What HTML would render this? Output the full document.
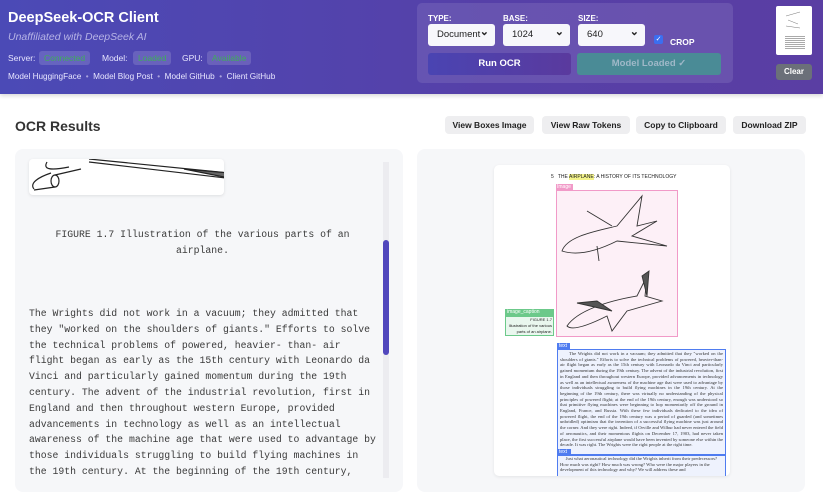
<!DOCTYPE html>
<html><head><meta charset="utf-8"><style>
*{box-sizing:border-box;margin:0;padding:0}
body{width:823px;height:496px;overflow:hidden;background:#fff;font-family:"Liberation Sans",sans-serif;position:relative}
.hdr{position:absolute;left:0;top:0;width:823px;height:94px;background:linear-gradient(90deg,#4b4ab6,#5640a8 60%,#5a3ea3);box-shadow:0 2px 4px rgba(0,0,0,.15)}
.abs{position:absolute}
h1{position:absolute;left:8px;top:10px;font-size:14.5px;color:#fff;font-weight:bold}
.sub{left:8px;top:31px;font-size:10.5px;font-style:italic;color:#b7b4e6}
.st{top:53px;font-size:8.5px;color:#e8e6ff}
.pill{position:absolute;top:51px;height:14px;background:rgba(255,255,255,.15);border-radius:3px;color:#3fae5a;font-size:8.5px;line-height:14px;padding:0 5px}
.links{left:8px;top:72px;font-size:8.2px;color:#e8e6ff}
.links span{color:#a9a3dd;margin:0 4.5px}
.ctl{left:417px;top:3px;width:316px;height:80px;background:rgba(255,255,255,.1);border-radius:5px}
.lbl{font-size:8px;font-weight:bold;color:#fff;top:14px}
.sel{top:24px;height:22px;background:#f7f7fb;border-radius:3px;font-size:9.5px;color:#222;line-height:22px;padding-left:9px}
.sel i{position:absolute;right:6px;top:-3px;font-style:normal;font-size:11px;font-weight:bold}
.btn{top:53px;height:22px;border-radius:3px;font-size:9.5px;font-weight:bold;text-align:center;line-height:22px}
.tb{top:116px;height:18px;background:#eeeef0;border-radius:4px;font-size:8.5px;color:#222;text-align:center;line-height:18px;font-weight:bold}
.panel{top:149px;height:343px;background:#f6f7f9;border-radius:8px}
.mono{font-family:"Liberation Mono",monospace;font-size:9.8px;color:#3a3a3a;line-height:15.8px;white-space:pre}
</style></head><body>
<div class="hdr">
<h1>DeepSeek-OCR Client</h1>
<div class="abs sub">Unaffiliated with DeepSeek AI</div>
<div class="abs st" style="left:8px">Server:</div>
<div class="pill" style="left:39px">Connected</div>
<div class="abs st" style="left:102px">Model:</div>
<div class="pill" style="left:133px">Loaded</div>
<div class="abs st" style="left:182px">GPU:</div>
<div class="pill" style="left:207px">Available</div>
<div class="abs links">Model HuggingFace<span>•</span>Model Blog Post<span>•</span>Model GitHub<span>•</span>Client GitHub</div>
<div class="abs ctl"></div>
<div class="abs lbl" style="left:428px">TYPE:</div>
<div class="abs lbl" style="left:503px">BASE:</div>
<div class="abs lbl" style="left:578px">SIZE:</div>
<div class="abs sel" style="left:428px;width:67px">Document<i>⌄</i></div>
<div class="abs sel" style="left:503px;width:67px">1024<i>⌄</i></div>
<div class="abs sel" style="left:578px;width:67px">640<i>⌄</i></div>
<div class="abs" style="left:654px;top:35px;width:9px;height:9px;background:#3b6ef0;border-radius:2px;color:#fff;font-size:7px;line-height:9px;text-align:center">✓</div>
<div class="abs" style="left:670px;top:37px;font-size:8.5px;color:#fff;font-weight:bold">CROP</div>
<div class="abs btn" style="left:428px;width:143px;background:linear-gradient(90deg,#4a44b2,#5a3a9e);color:#fff">Run OCR</div>
<div class="abs btn" style="left:577px;width:144px;background:#4a8b96;color:#9fb8c8">Model Loaded ✓</div>
<div class="abs" style="left:776px;top:6px;width:36px;height:49px;background:#fff;border-radius:2px">
<svg width="36" height="49"><g stroke="#777" stroke-width=".5" fill="none"><path d="M10 10l14-4M12 14l10 4M10 20l14 2"/></g><g fill="#aaa"><rect x="9" y="30" width="20" height="1"/><rect x="9" y="32" width="20" height="1"/><rect x="9" y="34" width="20" height="1"/><rect x="9" y="36" width="20" height="1"/><rect x="9" y="38" width="20" height="1"/><rect x="9" y="40" width="20" height="1"/><rect x="9" y="42" width="20" height="1"/></g></svg></div>
<div class="abs" style="left:776px;top:64px;width:36px;height:16px;background:#6b7079;border-radius:3px;color:#fff;font-size:8px;font-weight:bold;text-align:center;line-height:16px">Clear</div>
</div>
<div class="abs" style="left:15px;top:118px;font-size:14px;font-weight:bold;color:#333">OCR Results</div>
<div class="abs tb" style="left:445px;width:89px">View Boxes Image</div>
<div class="abs tb" style="left:542px;width:88px">View Raw Tokens</div>
<div class="abs tb" style="left:636px;width:90px">Copy to Clipboard</div>
<div class="abs tb" style="left:733px;width:73px">Download ZIP</div>
<div class="abs panel" style="left:15px;width:388px;overflow:hidden">
<div class="abs" style="left:14px;top:10px;width:195px;height:36px;background:#fff;border-radius:4px;box-shadow:0 1px 3px rgba(0,0,0,.1)">
<svg width="195" height="36"><g stroke="#222" stroke-width="1.2" fill="none"><path d="M5 30 C0 24 10 18 22 14 M18 3 C14 10 20 12 40 8"/><ellipse cx="26" cy="22" rx="4" ry="6"/><path d="M26 16 L52 10 M26 28 L5 31"/><path d="M60 0 L200 14 M60 3 L205 20"/><path d="M155 10 L200 14 L205 20 Z" fill="#666"/></g></svg></div>
<div class="abs mono" style="left:0;width:375px;top:78px;text-align:center;line-height:16px">FIGURE 1.7 Illustration of the various parts of an
airplane.</div>
<div class="abs mono" style="left:14px;top:157px">The Wrights did not work in a vacuum; they admitted that
they "worked on the shoulders of giants." Efforts to solve
the technical problems of powered, heavier- than- air
flight began as early as the 15th century with Leonardo da
Vinci and particularly gained momentum during the 19th
century. The advent of the industrial revolution, first in
England and then throughout western Europe, provided
advancements in technology as well as an intellectual
awareness of the machine age that were used to advantage by
those individuals struggling to build flying machines in
the 19th century. At the beginning of the 19th century,</div>
<div class="abs" style="left:368px;top:13px;width:6px;height:316px;background:#ececf0"></div>
<div class="abs" style="left:368px;top:91px;width:6px;height:115px;background:#5147bd;border-radius:3px"></div>
</div>
<div class="abs panel" style="left:417px;width:388px"></div>
<div class="abs" style="left:494px;top:165px;width:236px;height:311px;background:#fff;border-radius:5px;box-shadow:0 1px 3px rgba(0,0,0,.08)"></div>
<div class="abs" style="left:551px;top:174px;font-size:5px;color:#222">5 &nbsp; THE <span style="background:#f3f38a">AIRPLANE</span>: A HISTORY OF ITS TECHNOLOGY</div>
<div class="abs" style="left:556px;top:184px;width:17px;height:7px;background:#f19ac8;color:#fff;font-size:5px;padding-left:1px">Image</div>
<div class="abs" style="left:556px;top:190px;width:122px;height:147px;background:#fdf0f7;border:1px solid #f19ac8">
<svg width="120" height="145"><g stroke="#333" stroke-width=".9" fill="none"><path d="M5 60 C10 45 40 40 60 35 L85 5 L80 35 L100 30 L75 45 L110 55 L60 50 C40 60 20 65 5 60Z M30 20 L55 35 M40 55 L42 70"/><path d="M10 135 C20 120 50 110 80 105 L90 85 L88 105 L105 110 L70 120 L55 140 L50 125 C30 135 15 140 10 135Z"/><path d="M85 85 L92 80 L90 105 Z" fill="#555"/><path d="M20 112 L40 110 L55 120Z" fill="#555"/></g></svg></div>
<div class="abs" style="left:505px;top:309px;width:49px;height:8px;background:#6cc98a;color:#fff;font-size:5px;padding-left:2px">image_caption</div>
<div class="abs" style="left:505px;top:316px;width:49px;height:20px;background:#e9f7ee;border:1px solid #6cc98a;font-size:4px;text-align:right;color:#222;line-height:5.8px;padding-right:1px;overflow:hidden;white-space:nowrap">FIGURE 1.7<br>Illustration of the various<br>parts of an airplane.</div>
<div class="abs" style="left:557px;top:343px;width:13px;height:7px;background:#4f7cf0;color:#fff;font-size:5px;padding-left:2px">text</div>
<div class="abs" style="left:557px;top:349px;width:169px;height:106px;background:#eef2fd;border:1px solid #4f7cf0;overflow:hidden;font-family:'Liberation Serif',serif;font-size:4.6px;line-height:5.7px;color:#333;text-align:justify;padding:1px 2px">&nbsp;&nbsp;&nbsp;&nbsp;&nbsp;The Wrights did not work in a vacuum; they admitted that they "worked on the shoulders of giants." Efforts to solve the technical problems of powered, heavier-than-air flight began as early as the 15th century with Leonardo da Vinci and particularly gained momentum during the 19th century. The advent of the industrial revolution, first in England and then throughout western Europe, provided advancements in technology as well as an intellectual awareness of the machine age that were used to advantage by those individuals struggling to build flying machines in the 19th century. At the beginning of the 19th century, there was virtually no understanding of the physical principles of powered flight; at the end of the 19th century, enough was understood so that primitive flying machines were beginning to hop momentarily off the ground in England, France, and Russia. With these few individuals dedicated to the idea of powered flight, the end of the 19th century was a period of guarded (and sometimes unbridled) optimism that the invention of a successful flying machine was just around the corner. And they were right. Indeed, if Orville and Wilbur had never entered the field of aeronautics, and their momentous flights on December 17, 1903, had never taken place, the first successful airplane would have been invented by someone else within the decade. It was right. The Wrights were the right people at the right time.</div>
<div class="abs" style="left:557px;top:449px;width:14px;height:7px;background:#4f7cf0;color:#fff;font-size:5px;padding-left:2px">text</div>
<div class="abs" style="left:557px;top:455px;width:169px;height:21px;background:#eef2fd;border:1px solid #4f7cf0;border-bottom:none;overflow:hidden;font-family:'Liberation Serif',serif;font-size:4.6px;line-height:5.7px;color:#333;padding:0 2px">&nbsp;&nbsp;&nbsp;&nbsp;&nbsp;Just what aeronautical technology did the Wrights inherit from their predecessors? How much was right? How much was wrong? Who were the major players in the development of this technology and why? We will address these and</div>
</body></html>
